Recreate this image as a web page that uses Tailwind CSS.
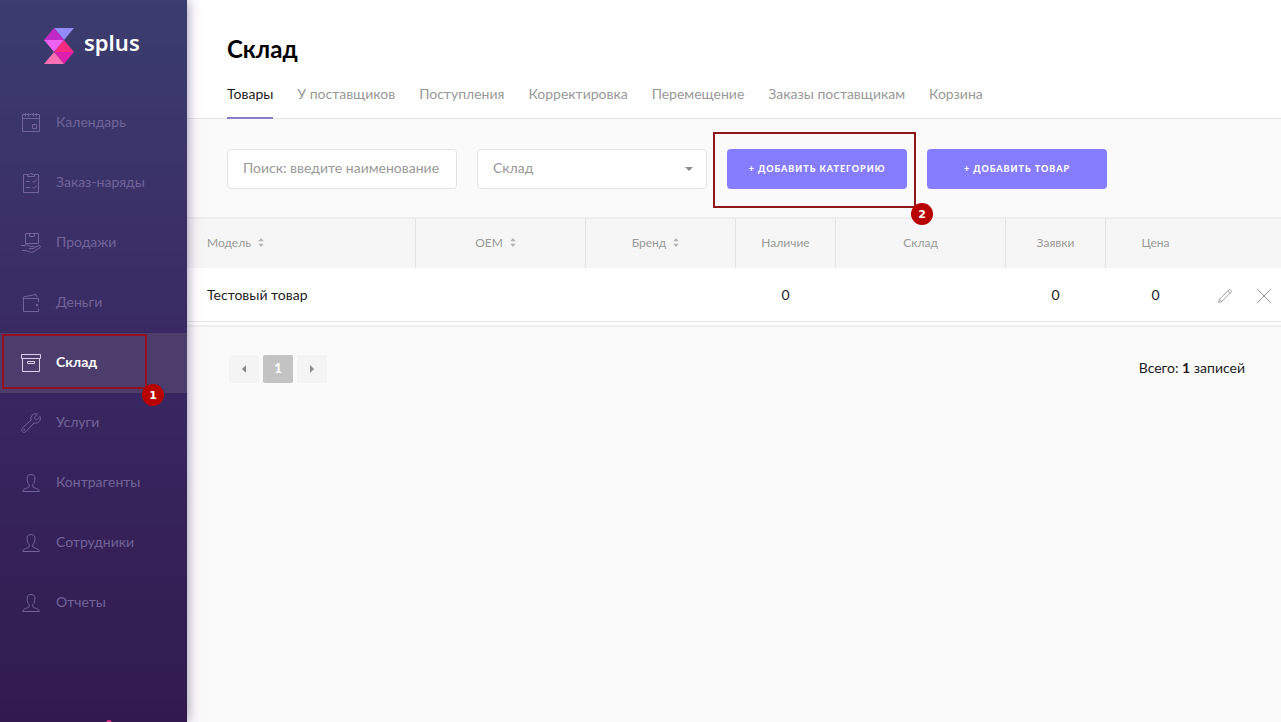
<!DOCTYPE html>
<html lang="ru">
<head>
<meta charset="utf-8">
<meta name="viewport" content="width=device-width, initial-scale=1">
<title>Склад — splus</title>
<script src="https://cdn.jsdelivr.net/npm/@tailwindcss/browser@4"></script>
</head>
<body class="flex min-h-screen overflow-x-hidden bg-[#fafafa] font-['Lato',sans-serif] text-sm text-[#1c1c1c]">

<svg class="hidden" aria-hidden="true">
  <symbol id="person" viewBox="0 0 20 20"><path d="M10 1.500C7.300 1.500 5.900 3 6.100 5.500C6.200 8.500 6.800 10.500 8.200 11.500V14C7 15.300 2 15 1.800 18.500H18.200C18 15 13 15.300 11.800 14V11.500C13.200 10.500 13.800 8.500 13.900 5.500C14.100 3 12.700 1.500 10 1.500Z"/></symbol>
  <symbol id="sort" viewBox="0 0 6 10"><path d="M0 3.500L3 0L6 3.500ZM0 6.500L3 10L6 6.500Z"/></symbol>
</svg>

<aside class="relative z-10 flex w-[187px] shrink-0 flex-col overflow-hidden bg-linear-to-b from-[#3b3d6e] via-[#392862] to-[#311b4e] shadow-[0_0_12px_rgba(49,27,90,0.5)]">
  <a href="#" class="flex h-[93px] items-center gap-[10px] pb-0.5 pl-11 text-white">
    <svg class="h-9 w-[30px]" viewBox="0 0 30 36" aria-hidden="true">
      <path fill="#928bfa" d="M10 0H30L20 12Z"/>
      <path fill="#c02bc8" d="M10 0L20 12H0Z"/>
      <path fill="#ee62f3" d="M0 12H20L10 24Z"/>
      <path fill="#fb2c80" d="M20 12L30 24H10Z"/>
      <path fill="#dd1fb0" d="M10 24H30L20 36Z"/>
      <path fill="#fb6fb4" d="M10 24L20 36H0Z"/>
    </svg>
    <span class="pb-2 font-['Noto_Sans',sans-serif] text-[22px] leading-7 font-semibold">splus</span>
  </a>
  <nav>
    <ul class="text-[#72649a]">
      <li><a href="#" class="flex h-15 items-center gap-[15px] pl-[21px]">
        <svg class="size-5 fill-none stroke-current" viewBox="0 0 20 20"><path d="M1.500 1.500H18.500V18.500H1.500ZM1.500 5.500H18.500M4.500 0V3.500M7.500 0V3.500M12.500 0V3.500M15.500 0V3.500M11.500 11.500H15.500V15.500H11.500Z"/></svg>
        <span class="pb-0.5">Календарь</span></a></li>
      <li><a href="#" class="flex h-15 items-center gap-[15px] pl-[21px]">
        <svg class="size-5 fill-none stroke-current" viewBox="0 0 20 20"><path d="M6.500 1.500H2.500V19.500H17.500V1.500H13.500M6.500 3.500V1.500H8.500C8.500 0 11.500 0 11.500 1.500H13.500V3.500ZM5 8.500H9M5 14.500H9M11.500 8L13 9.500L15.500 6.500M11.500 14L13 15.500L15.500 12.500"/></svg>
        <span class="pb-0.5">Заказ-наряды</span></a></li>
      <li><a href="#" class="flex h-15 items-center gap-[15px] pl-[21px]">
        <svg class="size-5 fill-none stroke-current" viewBox="0 0 20 20"><path d="M4.500 .5H17.500V10.500H4.500ZM8.500 .5V3.500H13.500V.5M0 12.500H3C6 11 8 12.500 9.500 13.500H13C14.500 14 13.500 15.500 12 15.500H8M13.500 14.500L18 12.500C19.500 12.500 20 13.500 19 14.500L12 19C9 20 7 17.500 4 17.500H1"/></svg>
        <span class="pb-0.5">Продажи</span></a></li>
      <li><a href="#" class="flex h-15 items-center gap-[15px] pl-[21px]">
        <svg class="size-5 fill-none stroke-current" viewBox="0 0 20 20"><path d="M17.500 9V5.500H3.500C1.500 5.500 2 4 3 3.800L15 1.500L16 4M2.500 5V18.500H17.500V15.500"/><circle class="fill-current stroke-none" cx="16" cy="12" r="1.200"/></svg>
        <span class="pb-0.5">Деньги</span></a></li>
      <li class="relative bg-[#4c3d6c]"><a href="#" aria-current="page" class="flex h-15 items-center gap-[15px] pl-[21px] font-bold text-white">
        <svg class="size-5 fill-none stroke-[#d9d0ec]" viewBox="0 0 20 20"><path d="M.5 1.500H19.500V5.500H.5ZM1.500 5.500V18.500H18.500V5.500M6.500 8.500H13.500V10.500H6.500Z"/></svg>
        <span class="pb-0.5">Склад</span></a>
        <span class="pointer-events-none absolute top-px left-0.5 h-[55px] w-[145px] border-2 border-[#960f1e]"></span>
        <span class="absolute top-[51px] left-[142px] z-10 flex size-[22px] items-center justify-center rounded-full bg-[#b80000] font-['DejaVu_Sans',sans-serif] text-[11px] leading-none font-bold text-white">1</span>
      </li>
      <li><a href="#" class="flex h-15 items-center gap-[15px] pl-[21px]">
        <svg class="size-5 fill-none stroke-current" viewBox="0 0 20 20"><path d="M16.500 1.200C13.500 -.3 9 2 10 7L1 15.500C-.5 18 2.500 20.500 4.500 19L13 10C18 11 20.500 6.500 19 3.500L15.500 7L13 4.700Z"/><circle cx="3.300" cy="16.800" r=".6"/></svg>
        <span class="pb-0.5">Услуги</span></a></li>
      <li><a href="#" class="flex h-15 items-center gap-[15px] pl-[21px]"><svg class="size-5 fill-none stroke-current"><use href="#person"/></svg><span class="pb-0.5">Контрагенты</span></a></li>
      <li><a href="#" class="flex h-15 items-center gap-[15px] pl-[21px]"><svg class="size-5 fill-none stroke-current"><use href="#person"/></svg><span class="pb-0.5">Сотрудники</span></a></li>
      <li><a href="#" class="flex h-15 items-center gap-[15px] pl-[21px]"><svg class="size-5 fill-none stroke-current"><use href="#person"/></svg><span class="pb-0.5">Отчеты</span></a></li>
    </ul>
  </nav>
  <span class="absolute -bottom-1 left-[106px] size-1.5 rounded-full bg-[#e0358c]"></span>
</aside>

<main class="min-w-0 flex-1">
  <header class="border-b border-[#e6e6e6] bg-white px-10 pt-[31px]">
    <h1 class="text-2xl leading-9 font-bold text-black">Склад</h1>
    <nav class="-mb-px flex gap-6 pt-[9px] whitespace-nowrap text-[#999]">
      <a href="#" aria-current="page" class="h-[43px] border-b-2 border-[#8a7fc4] pt-2 text-[#1c1c1c]">Товары</a>
      <a href="#" class="pt-2">У поставщиков</a>
      <a href="#" class="pt-2">Поступления</a>
      <a href="#" class="pt-2">Корректировка</a>
      <a href="#" class="pt-2">Перемещение</a>
      <a href="#" class="pt-2">Заказы поставщикам</a>
      <a href="#" class="pt-2">Корзина</a>
    </nav>
  </header>

  <form class="flex gap-5 px-10 pt-[30px] pb-7">
    <input type="text" aria-label="Поиск" placeholder="Поиск: введите наименование" class="h-10 w-[230px] rounded border border-[#e3e3e3] bg-white px-[15px] pb-[3px] placeholder:text-[#999]">
    <div class="relative w-[230px]">
      <select aria-label="Склад" class="h-10 w-full appearance-none rounded border border-[#e3e3e3] bg-white px-[15px] pb-0.5 text-[#999]"><option>Склад</option></select>
      <svg class="pointer-events-none absolute top-[18px] right-[14px] h-1 w-2 fill-[#8c8c8c]" viewBox="0 0 8 4"><path d="M0 0H8L4 4Z"/></svg>
    </div>
    <div class="relative">
      <button type="button" class="h-10 w-[180px] rounded bg-[#857dfd] text-[9px] font-black tracking-[1px] text-white uppercase">+ Добавить категорию</button>
      <span class="pointer-events-none absolute -top-[17px] -left-3.5 h-19 w-[203px] border-2 border-[#8f1619]"></span>
      <span class="absolute top-[54px] left-[184px] z-10 flex size-[22px] items-center justify-center rounded-full bg-[#b80000] font-['DejaVu_Sans',sans-serif] text-[11px] leading-none font-bold text-white">2</span>
    </div>
    <button type="button" class="h-10 w-[180px] rounded bg-[#857dfd] text-[9px] font-black tracking-[1px] text-white uppercase">+ Добавить товар</button>
  </form>

  <div class="border-t-2 border-b-2 border-t-[#eeeeee] border-b-[#f0f0f0] bg-white pb-[3px]">
    <table class="w-full table-fixed border-separate border-spacing-0">
      <colgroup><col><col class="w-[170px]"><col class="w-[150px]"><col class="w-[100px]"><col class="w-[170px]"><col class="w-[100px]"><col class="w-[100px]"><col class="w-[75px]"></colgroup>
      <thead class="bg-[#f6f6f6] text-xs text-[#999]">
        <tr class="h-[49px] *:pb-0.5">
          <th class="border-r border-[#e3e3e3] pl-5 text-left font-normal"><button type="button" class="inline-flex items-center gap-[7px]">Модель <svg class="h-[9px] w-1.5 fill-[#b5b5b5]"><use href="#sort"/></svg></button></th>
          <th class="border-r border-[#e3e3e3] pr-[10px] font-normal"><button type="button" class="inline-flex items-center gap-[7px]">OEM <svg class="h-[9px] w-1.5 fill-[#b5b5b5]"><use href="#sort"/></svg></button></th>
          <th class="border-r border-[#e3e3e3] pr-[10px] font-normal"><button type="button" class="inline-flex items-center gap-[7px]">Бренд <svg class="h-[9px] w-1.5 fill-[#b5b5b5]"><use href="#sort"/></svg></button></th>
          <th class="border-r border-[#e3e3e3] font-normal">Наличие</th>
          <th class="border-r border-[#e3e3e3] font-normal">Склад</th>
          <th class="border-r border-[#e3e3e3] font-normal">Заявки</th>
          <th class="pr-px font-normal">Цена</th>
          <th></th>
        </tr>
      </thead>
      <tbody>
        <tr class="h-[54px] text-center *:border-b *:border-[#e6e6e6] *:pr-px">
          <td class="pl-5 text-left">Тестовый товар</td>
          <td></td><td></td>
          <td>0</td>
          <td></td>
          <td>0</td>
          <td>0</td>
          <td>
            <div class="flex items-center justify-end gap-[25px] pt-[3px] pr-[9px]">
              <button type="button" aria-label="Изменить"><svg class="block size-3.5 fill-none stroke-[#a3a3a3]" viewBox="0 0 14 14"><path d="M.5 13.500L1.500 10.200L10.800 .9C12.300 0 14 1.700 13.100 3.200L3.800 12.500ZM1.500 10.200L3.800 12.500M9.800 1.900L12.100 4.200"/></svg></button>
              <button type="button" aria-label="Удалить"><svg class="block size-3.5 fill-none stroke-[#8f8f8f]" viewBox="0 0 14 14"><path d="M.3 .3L13.700 13.700M13.700 .3L.3 13.700"/></svg></button>
            </div>
          </td>
        </tr>
      </tbody>
    </table>
  </div>

  <footer class="flex items-center justify-between pt-7 pr-9 pl-[42px]">
    <nav aria-label="Страницы" class="flex gap-1">
      <button type="button" aria-label="Назад" class="flex h-7 w-[30px] items-center justify-center rounded-xs bg-[#f4f4f4]"><svg class="h-2 w-1 fill-[#8a8a8a]" viewBox="0 0 4 8"><path d="M4 0V8L0 4Z"/></svg></button>
      <button type="button" aria-current="page" class="h-7 w-[30px] rounded-xs bg-[#c3c3c3] pb-[3px] font-bold text-white">1</button>
      <button type="button" aria-label="Вперёд" class="flex h-7 w-[30px] items-center justify-center rounded-xs bg-[#f4f4f4]"><svg class="h-2 w-1 fill-[#8a8a8a]" viewBox="0 0 4 8"><path d="M0 0V8L4 4Z"/></svg></button>
    </nav>
    <p class="pb-0.5">Всего: <b>1</b> записей</p>
  </footer>
</main>
</body>
</html>
